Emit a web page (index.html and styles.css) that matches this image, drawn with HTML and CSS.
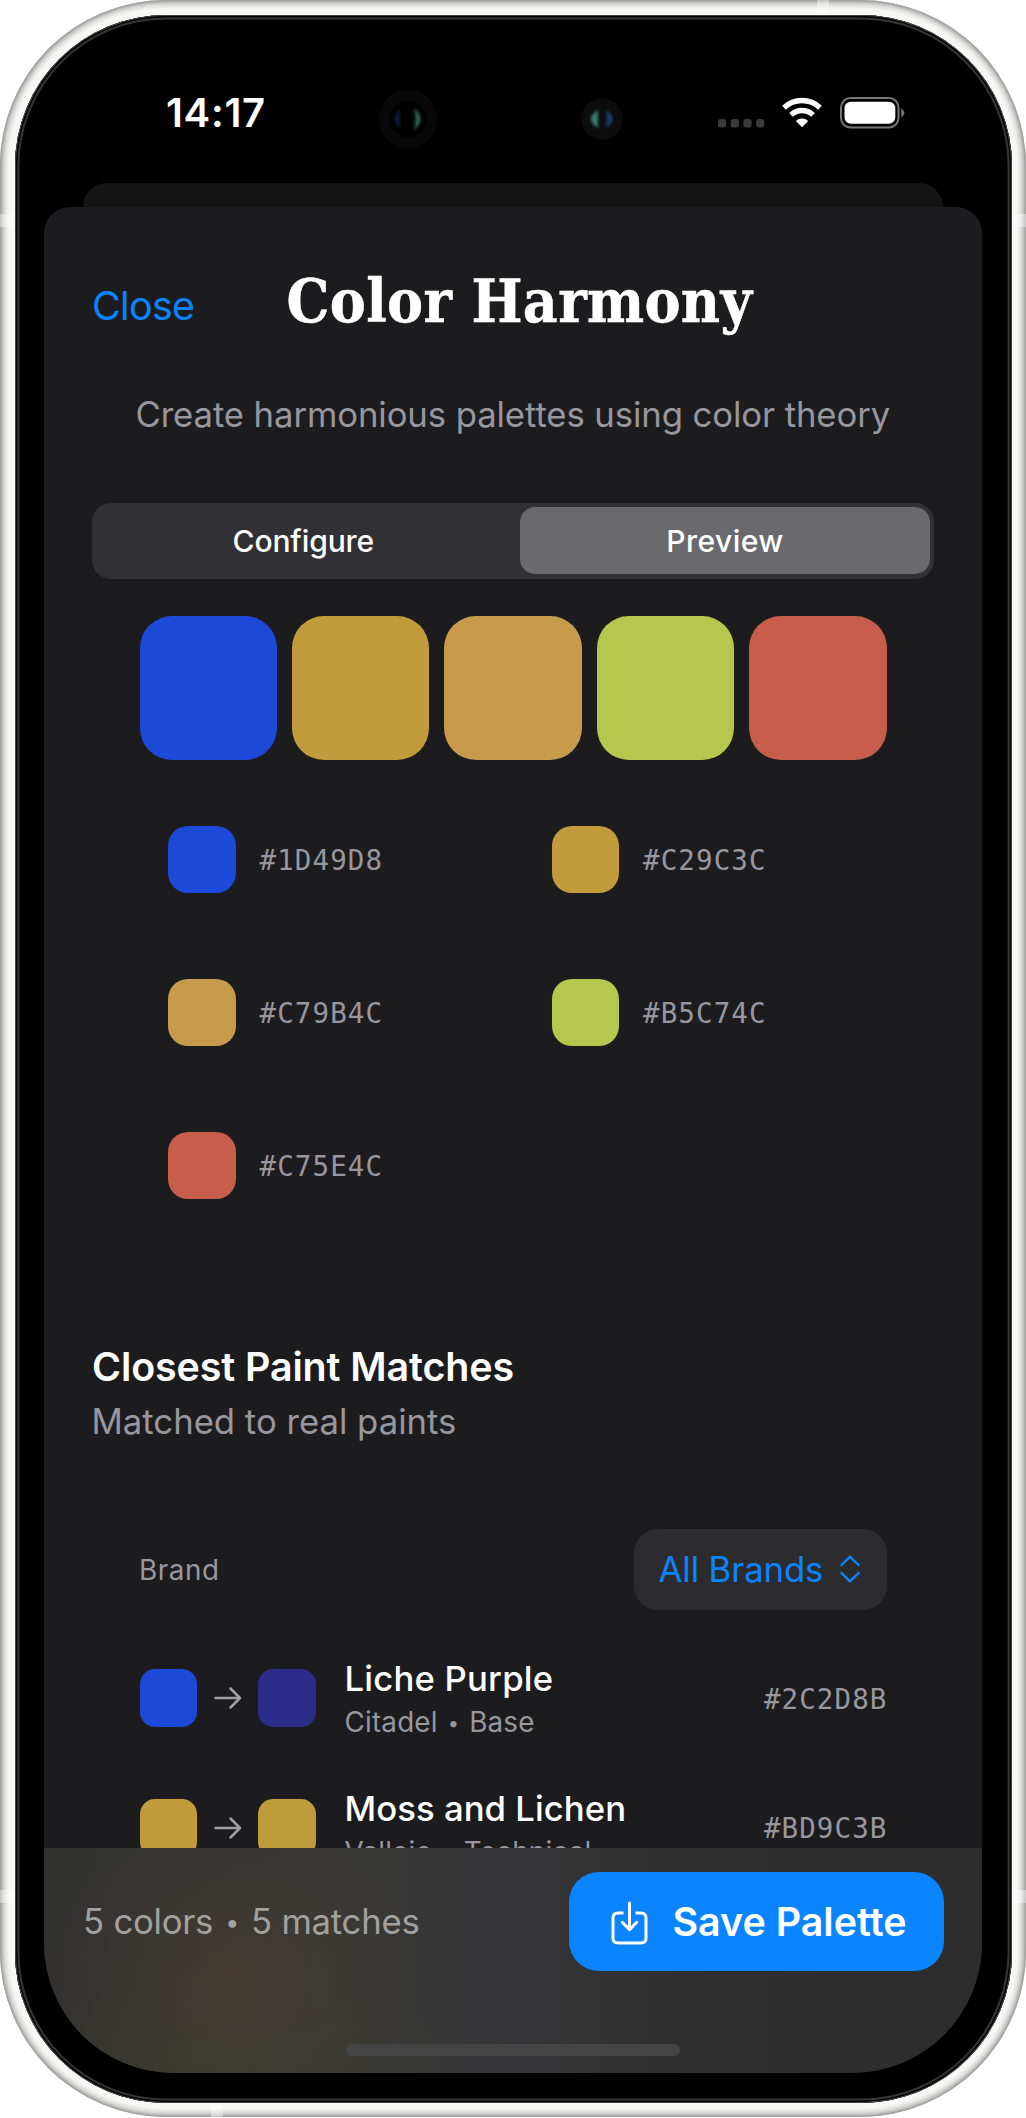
FILE: index.html
```
<!DOCTYPE html>
<html lang="en">
<head>
<meta charset="utf-8">
<title>Color Harmony</title>
<link rel="stylesheet" href="styles.css">
</head>
<body>
<div class="device">
  <i class="band band-top"></i><i class="band band-bottom"></i>
  <i class="band band-l1"></i><i class="band band-l2"></i>
  <i class="band band-r1"></i><i class="band band-r2"></i>
  <div class="bezel">
    <main class="screen">
      <header class="status">
        <span class="time">14:17</span>
        <svg class="cameras" width="250" height="60" viewBox="0 0 250 60">
          <defs>
            <filter id="soft" x="-1" y="-1" width="3" height="3"><feGaussianBlur stdDeviation="1.6"/></filter>
          </defs>
          <circle cx="29" cy="30" r="29" fill="#080808"/>
          <circle cx="29" cy="30" r="18.5" fill="#000"/>
          <path d="M21 20 Q10 30 21 40Z" fill="#10193c" filter="url(#soft)"/>
          <path d="M35 19 Q48 30 35 41Q38 30 35 19Z" fill="#2f6a5a" filter="url(#soft)"/>
          <circle cx="223" cy="30" r="20.7" fill="#0c0c0c"/>
          <path d="M219 21 Q205 30 219 39Z" fill="#3c7d70" filter="url(#soft)"/>
          <path d="M227 21 Q240 30 227 39Q229 30 227 21Z" fill="#253a7c" filter="url(#soft)"/>
        </svg>
        <div class="indicators">
          <svg width="47" height="31" viewBox="0 0 47 31" fill="#3a3a3a">
            <rect x="0" y="22" width="8.2" height="8.4" rx="2.6"/><rect x="12.7" y="22" width="8.2" height="8.4" rx="2.6"/><rect x="25.4" y="22" width="8.2" height="8.4" rx="2.6"/><rect x="38.1" y="22" width="8.2" height="8.4" rx="2.6"/>
          </svg>
          <svg class="wifi" width="40" height="31" viewBox="0 0 40 31" fill="none" stroke="#fff" stroke-width="5.4">
            <path d="M2 10.7 A26 26 0 0 1 38 10.7"/>
            <path d="M9 17.9 A16 16 0 0 1 31 17.9"/>
            <path d="M20 30.2 L13.8 24 A9 9 0 0 1 26.2 24Z" fill="#fff" stroke="none"/>
          </svg>
          <svg class="battery" width="66" height="32" viewBox="0 0 66 32">
            <rect x="1" y="1" width="57.5" height="29.6" rx="9.5" fill="none" stroke="#757575" stroke-width="2"/>
            <rect x="4.5" y="4.7" width="50.8" height="22" rx="6.5" fill="#fff"/>
            <path d="M61.2 11 Q67.6 15.8 61.2 20.6Z" fill="#757575"/>
          </svg>
        </div>
      </header>

      <div class="back-card"></div>

      <section class="sheet">
        <div class="titlebar">
          <a class="close">Close</a>
          <h1 class="title">Color Harmony</h1>
        </div>
        <p class="subtitle">Create harmonious palettes using color theory</p>

        <div class="segmented">
          <span class="segment">Configure</span>
          <span class="segment segment-on">Preview</span>
        </div>

        <div class="palette">
          <i class="blue"></i><i class="gold"></i><i class="tan"></i><i class="lime"></i><i class="red"></i>
        </div>

        <div class="codes">
          <div class="code"><i class="blue"></i><span class="hex">#1D49D8</span></div>
          <div class="code"><i class="gold"></i><span class="hex">#C29C3C</span></div>
          <div class="code"><i class="tan"></i><span class="hex">#C79B4C</span></div>
          <div class="code"><i class="lime"></i><span class="hex">#B5C74C</span></div>
          <div class="code"><i class="red"></i><span class="hex">#C75E4C</span></div>
        </div>

        <h2 class="section-title">Closest Paint Matches</h2>
        <p class="section-note">Matched to real paints</p>

        <div class="brand-row">
          <span class="brand-label">Brand</span>
          <div class="brand-select">
            <span>All Brands</span>
            <svg width="20" height="28" viewBox="0 0 20 28" fill="none" stroke="#0a84ff" stroke-width="2.4" stroke-linecap="round" stroke-linejoin="round"><path d="M1.5 10 L10 1.6 L18.5 10M1.5 18 L10 26.4 L18.5 18"/></svg>
          </div>
        </div>

        <div class="matches">
          <div class="match">
            <i class="blue"></i>
            <svg class="arrow" width="28" height="24" viewBox="0 0 28 24" fill="none" stroke="#a09fa6" stroke-width="2.5" stroke-linecap="round" stroke-linejoin="round"><path d="M1.5 12 H26M16.5 2.5 L26 12 L16.5 21.5"/></svg>
            <i class="liche"></i>
            <div class="paint"><b class="name">Liche Purple</b><span class="range">Citadel <span class="dot">•</span> Base</span></div>
            <span class="hex">#2C2D8B</span>
          </div>
          <div class="match">
            <i class="gold"></i>
            <svg class="arrow" width="28" height="24" viewBox="0 0 28 24" fill="none" stroke="#a09fa6" stroke-width="2.5" stroke-linecap="round" stroke-linejoin="round"><path d="M1.5 12 H26M16.5 2.5 L26 12 L16.5 21.5"/></svg>
            <i class="moss"></i>
            <div class="paint"><b class="name moss-name">Moss and Lichen</b><span class="range">Vallejo <span class="dot">•</span> Technical</span></div>
            <span class="hex">#BD9C3B</span>
          </div>
        </div>

        <footer class="footer">
          <div class="actions">
            <span class="summary">5 colors <span class="dot">•</span> 5 matches</span>
            <button class="save">
              <svg width="37" height="44" viewBox="0 0 37 44" fill="none" stroke="#fff" stroke-width="3" stroke-linecap="round" stroke-linejoin="round"><path d="M12.5 12 H7 Q2 12 2 17 V37 Q2 42 7 42 H30 Q35 42 35 37 V17 Q35 12 30 12 H24.5" stroke-linecap="butt"/><path d="M18.5 2 V28M11.3 21.3 L18.5 28.6 L25.7 21.3"/></svg>
              <span>Save Palette</span>
            </button>
          </div>
          <div class="home"></div>
        </footer>
      </section>
    </main>
  </div>
</div>
</body>
</html>
```
FILE: styles.css
```
* { box-sizing: border-box; margin: 0; padding: 0; }
body {
  background: #fff;
  font-family: Inter, "Liberation Sans", sans-serif;
  color: #fff;
  white-space: nowrap;
}
i { display: block; flex: none; }
svg { display: block; flex: none; }

/* Device frame */
.device {
  position: relative;
  width: 1026px;
  height: 2117px;
  padding: 14.5px;
  border-radius: 166px;
  background: #f7f7f6;
  box-shadow: inset 0 0 1px 1.5px #a2a2a2, inset 0 0 2px 3.5px #bdbdbb, inset 0 0 2px 6px #dfdfda, inset 0 0 2px 8px #ecece9;
}
.bezel {
  height: 100%;
  padding: 29.5px;
  border-radius: 151px;
  background: #000;
  box-shadow: inset 0 0 0 .8px #555, inset 0 0 0 2.4px #050505, inset 0 0 0 4.4px #363636;
}
.band { position: absolute; background: rgba(255, 255, 255, .4); }
.band-top { left: 817px; top: 0; width: 12px; height: 13px; }
.band-bottom { left: 211px; bottom: 0; width: 12px; height: 14px; }
.band-l1, .band-r1 { top: 214px; width: 14px; height: 13px; }
.band-l2, .band-r2 { top: 1890px; width: 14px; height: 13px; }
.band-l1, .band-l2 { left: 0; }
.band-r1, .band-r2 { right: 0; }

.screen {
  display: flex;
  flex-direction: column;
  height: 2029px;
  border-radius: 130px;
  overflow: hidden;
  background: #000;
}

/* Status bar */
.status {
  position: relative;
  display: flex;
  justify-content: space-between;
  flex: none;
  height: 139px;
  padding: 45px 77px 0 122px;
}
.time { font-size: 40px; font-weight: 600; line-height: 48px; letter-spacing: .69px; }
.cameras { position: absolute; left: 335px; top: 45px; }
.indicators { display: flex; align-items: flex-start; padding-top: 7.5px; height: 50px; width: 187px; }
.wifi { margin-left: 17px; }
.battery { margin-left: 18px; }

/* Sheets */
.back-card {
  flex: none;
  height: 24px;
  margin: 0 39px;
  border-radius: 24px 24px 0 0;
  background: #141414;
}
.sheet {
  position: relative;
  flex: 1;
  min-height: 0;
  padding: 58px 48.5px 0 48px;
  border-radius: 26px 26px 0 0;
  background: #1c1c1e;
  overflow: hidden;
}
.titlebar { display: flex; align-items: flex-start; height: 72px; }
.close {
  width: 194.5px;
  margin-top: 17px;
  font-size: 39.4px;
  line-height: 48px;
  letter-spacing: -.68px;
  color: #0a84ff;
}
.title {
  font: 700 60px/72px "DejaVu Serif Condensed", "DejaVu Serif", serif;
  letter-spacing: .37px;
  -webkit-text-stroke: .5px #fff;
}
.subtitle {
  margin-top: 55.4px;
  font-size: 34.7px;
  line-height: 44px;
  letter-spacing: -.09px;
  text-align: center;
  color: #98979e;
}

.segmented {
  display: grid;
  grid-template-columns: 1fr 410px;
  gap: 12px;
  height: 76px;
  margin-top: 66.6px;
  padding: 4px;
  border-radius: 19px;
  background: #313034;
}
.segment {
  padding-left: 3px;
  border-radius: 15px;
  font-size: 30.1px;
  font-weight: 500;
  line-height: 69px;
  letter-spacing: -.16px;
  text-align: center;
}
.segment-on { padding-left: 1px; height: 67px; background: #69696e; letter-spacing: .41px; }

/* Swatch colours */
.blue { background: #1d49d8; }
.gold { background: #c29c3c; }
.tan { background: #c79b4c; }
.lime { background: #b5c74c; }
.red { background: #c75e4c; }
.liche { background: #2c2d8b; }
.moss { background: #bd9c3b; }

.palette {
  display: grid;
  grid-template-columns: repeat(5, 1fr);
  gap: 14.8px;
  height: 143.5px;
  margin: 37.2px 47px 0 47.5px;
}
.palette i { border-radius: 32px; }

.codes {
  display: grid;
  grid-template-columns: 383.5px 1fr;
  gap: 85.3px 0;
  margin: 66.3px 0 0 76px;
}
.code { display: flex; align-items: center; gap: 24px; }
.code i { width: 67.5px; height: 67.5px; border-radius: 20px; }
.hex {
  padding-top: 1px;
  font-family: "DejaVu Sans Mono", monospace;
  font-size: 27.5px;
  line-height: 36px;
  letter-spacing: 1.1px;
  color: #98979e;
}

/* Paint matches */
.section-title {
  margin-top: 142.8px;
  font-size: 39.4px;
  font-weight: 600;
  line-height: 50px;
  letter-spacing: -.1px;
}
.section-note {
  margin-top: 7.1px;
  margin-left: -.5px;
  font-size: 34.7px;
  line-height: 44px;
  color: #98979e;
}
.brand-row {
  display: flex;
  align-items: center;
  justify-content: space-between;
  margin: 85.6px 47px 0 47px;
}
.brand-label { padding-top: 1.5px; font-size: 27.8px; letter-spacing: .6px; color: #98979e; }
.brand-select {
  display: flex;
  align-items: center;
  justify-content: space-between;
  width: 253px;
  height: 81px;
  padding: 0 27px 0 25px;
  border-radius: 24px;
  background: #2c2c2e;
  font-size: 34.7px;
  letter-spacing: -.1px;
  color: #0a84ff;
}
.matches { display: grid; gap: 31.7px; margin: 39.6px 46px 0 47.5px; }
.match { display: flex; align-items: center; height: 98px; }
.match i { width: 57.5px; height: 57.5px; border-radius: 15px; }
.arrow { margin: 0 16px 0 17px; }
.paint { display: flex; flex-direction: column; flex: 1; gap: 3.5px; margin-left: 29px; }
.name { font-size: 34.7px; font-weight: 500; line-height: 44px; letter-spacing: .2px; }
.moss-name { letter-spacing: .04px; }
.range { font-size: 27.8px; line-height: 36px; letter-spacing: .19px; color: #98979e; }
.dot { margin: 0 .1em; font-size: .72em; line-height: 0; vertical-align: .12em; }

.footer {
  position: absolute;
  left: 0;
  right: 0;
  bottom: 0;
  height: 225px;
  padding: 23.5px 38px 0;
  background:
    radial-gradient(ellipse 190px 150px at 190px 125px, rgba(70, 60, 50, .75), rgba(70, 60, 50, 0)),
    radial-gradient(ellipse 240px 110px at 180px 225px, rgba(60, 61, 48, .8), rgba(60, 61, 48, 0)),
    linear-gradient(90deg, #313130, #383836 32%, #363638 48%, #2f2f2f 68%, #2d2d2d);
}
.actions { display: flex; align-items: center; justify-content: space-between; }
.summary { padding-left: 1px; font-size: 34.7px; line-height: 44px; letter-spacing: -.23px; color: #a2a19e; }
.save {
  display: flex;
  align-items: center;
  gap: 25px;
  width: 375.5px;
  height: 99px;
  padding-left: 42px;
  border: 0;
  border-radius: 30px;
  background: #0a84ff;
  color: #fff;
  font: 600 39.4px/48px Inter, sans-serif;
}
.save span { padding-top: 1.5px; }
.save svg { margin-top: 3px; }
.home { width: 334px; height: 12px; margin: 73.5px auto 0; border-radius: 6px; background: #444; }
```
